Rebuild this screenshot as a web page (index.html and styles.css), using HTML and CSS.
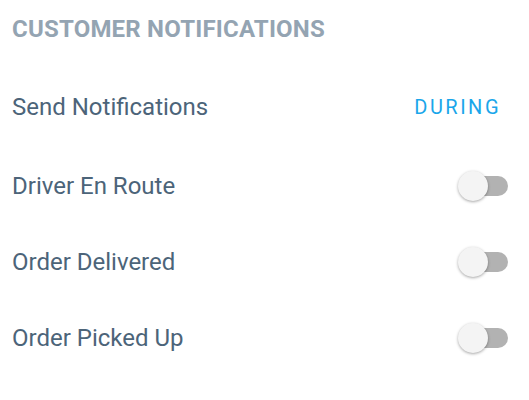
FILE: index.html
```html
<!DOCTYPE html>
<html lang="en">
<head>
    <meta charset="UTF-8">
    <meta name="viewport" content="width=device-width, initial-scale=1.0">
    <title>Customer Notifications</title>
    <link rel="stylesheet" href="styles.css">
</head>
<body>
    <!-- Customer notifications settings -->
    <div class="section">
        <h2 class="section-title">CUSTOMER NOTIFICATIONS</h2>

        <div class="setting-row first">
            <span class="setting-label">Send Notifications</span>
            <span class="setting-value">DURING</span>
        </div>

        <div class="setting-row">
            <span class="setting-label">Driver En Route</span>
            <span class="toggle"><span class="toggle-thumb"></span></span>
        </div>

        <div class="setting-row">
            <span class="setting-label">Order Delivered</span>
            <span class="toggle"><span class="toggle-thumb"></span></span>
        </div>

        <div class="setting-row">
            <span class="setting-label">Order Picked Up</span>
            <span class="toggle"><span class="toggle-thumb"></span></span>
        </div>
    </div>
</body>
</html>
```

FILE: styles.css
```css
* {
    margin: 0;
    padding: 0;
    box-sizing: border-box;
}

body {
    font-family: Roboto, "Noto Sans", sans-serif;
    background: #ffffff;
    width: 529px;
    height: 400px;
    overflow: hidden;
}

.section {
    padding: 15px 21px 0 12px;
}

.section-title {
    font-size: 24px;
    font-weight: 700;
    color: #94a4b2;
    line-height: 28px;
    letter-spacing: 0.2px;
}

.setting-row {
    display: flex;
    align-items: center;
    justify-content: space-between;
    height: 76px;
}

.setting-row.first {
    margin-top: 23px;
    height: 82px;
}

.setting-label {
    font-size: 24px;
    color: #4c6479;
}

.setting-value {
    font-size: 20px;
    color: #1aa6ea;
    letter-spacing: 2.5px;
    margin-right: 7px;
}

.toggle {
    position: relative;
    width: 48px;
    height: 20px;
    border-radius: 10px;
    background: #b2b2b2;
}

.toggle-thumb {
    position: absolute;
    left: -2px;
    top: -5px;
    width: 30px;
    height: 30px;
    border-radius: 50%;
    background: #f4f4f4;
    box-shadow: 0 1px 3px rgba(0, 0, 0, 0.35);
}
```
